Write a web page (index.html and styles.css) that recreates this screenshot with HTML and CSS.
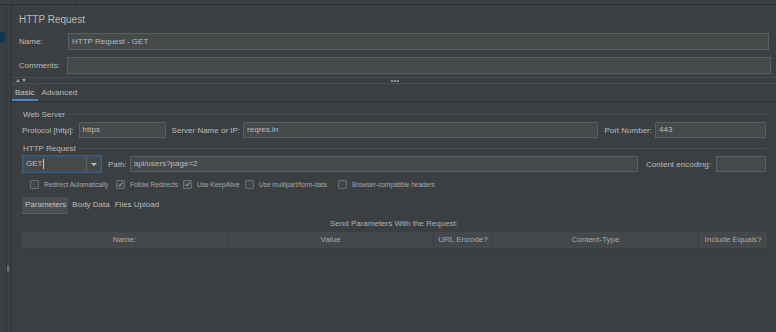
FILE: index.html
```html
<!doctype html>
<html lang="en">
<head>
	<meta charset="UTF-8" />
	<title>HTTP Request</title>
	<link rel="stylesheet" href="styles.css">
</head>
<body>
    <div id="topbar">
        <span class="seg seg1"></span>
        <span class="seg seg2"></span>
    </div>
    <div id="workspace">
        <div id="tree">
            <div class="tree_sel"></div>
        </div>
        <div id="splitter">
            <span class="grip"></span>
        </div>
        <div id="editor">
            <div class="title">HTTP Request</div>
            <div class="field_row name_row">
                <label class="field_label">Name:</label>
                <div class="input">HTTP Request - GET</div>
            </div>
            <div class="field_row comments_row">
                <label class="field_label">Comments:</label>
                <div class="input"></div>
            </div>
            <div class="divider">
                <span class="arrows"><i class="up"></i><i class="down"></i></span>
                <span class="dots"><i></i><i></i><i></i></span>
            </div>
            <ul class="tabs">
                <li class="on">Basic</li>
                <li>Advanced</li>
            </ul>

            <div class="panel">
                <div class="legend"><span>Web Server</span></div>
                <div class="line_row server_row">
                    <label>Protocol [http]:</label>
                    <div class="input w_protocol">https</div>
                    <label class="gap">Server Name or IP:</label>
                    <div class="input grow">reqres.in</div>
                    <label class="gap">Port Number:</label>
                    <div class="input w_port">443</div>
                </div>

                <div class="legend legend_req"><span>HTTP Request</span></div>
                <div class="line_row request_row">
                    <div class="combo">
                        <span class="combo_text">GET<i class="caret"></i></span>
                        <span class="combo_btn"><i></i></span>
                    </div>
                    <label class="gap">Path:</label>
                    <div class="input grow">api/users?page=2</div>
                    <label class="gap_l">Content encoding:</label>
                    <div class="input w_enc"></div>
                </div>

                <ul class="checks">
                    <li><span class="box"></span>Redirect Automatically</li>
                    <li><span class="box"><svg viewBox="0 0 9 9"><polyline points="1.8,4.6 3.6,6.6 7.2,1.8" /></svg></span>Follow Redirects</li>
                    <li><span class="box"><svg viewBox="0 0 9 9"><polyline points="1.8,4.6 3.6,6.6 7.2,1.8" /></svg></span>Use KeepAlive</li>
                    <li><span class="box"></span>Use multipart/form-data</li>
                    <li><span class="box"></span>Browser-compatible headers</li>
                </ul>

                <ul class="subtabs">
                    <li class="on">Parameters</li>
                    <li>Body Data</li>
                    <li>Files Upload</li>
                </ul>

                <div class="send">Send Parameters With the Request:</div>
                <div class="table_head">
                    <span>Name:</span>
                    <span>Value</span>
                    <span>URL Encode?</span>
                    <span>Content-Type</span>
                    <span>Include Equals?</span>
                </div>
            </div>
        </div>
    </div>
</body>
</html>
```

FILE: styles.css
```css
* { margin: 0; padding: 0; box-sizing: border-box; }
html, body { width: 776px; height: 332px; overflow: hidden; }
body { background: #3c3f41; color: #bbbbbb; font-family: "Liberation Sans", Arial, sans-serif; font-size: 8px; }
ul { list-style: none; }
label { white-space: nowrap; }

#topbar { height: 5px; position: relative; background: #3d4042; border-bottom: 1px solid #2f3133; }
#topbar .seg { position: absolute; top: 0; width: 1px; height: 4px; background: #333537; }
#topbar .seg1 { left: 75px; }
#topbar .seg2 { left: 113px; }

#workspace { display: flex; height: 327px; }
#tree { width: 7px; border-right: 1px solid #323537; padding-top: 27px; }
#tree .tree_sel { width: 5px; height: 11px; background: #10374f; }
#splitter { width: 5px; border-right: 1px solid #2e3032; display: flex; align-items: center; justify-content: center; padding-top: 200px; padding-right: 2px; }
#splitter .grip { width: 2px; height: 7px; background: radial-gradient(circle, #9a9a9a 0.7px, transparent 1px) 0 0 / 2px 2.4px; }

#editor { flex: 1; padding-left: 7px; }
.title { margin-top: 7px; height: 16px; line-height: 16px; font-size: 10px; color: #bbbbbb; }

.field_row { display: flex; align-items: center; padding-right: 7px; }
.field_row .field_label { width: 49px; }
.name_row { margin-top: 5px; }
.comments_row { margin-top: 7px; padding-right: 5px; }
.comments_row .field_label { width: 48px; }
.field_row .input { flex: 1; }

.input { height: 16px; line-height: 14px; padding: 0 3px; background: #45494a; border: 1px solid #5c5f60; color: #bbbbbb; white-space: nowrap; overflow: hidden; }
.name_row .input, .comments_row .input { height: 17px; line-height: 15px; }

.divider { margin: 3px 0 0 -7px; height: 7px; border-top: 1px solid #4a4d4f; border-bottom: 1px solid #4a4d4f; position: relative; }
.divider .arrows { position: absolute; left: 4px; top: 1px; display: flex; gap: 2px; }
.divider .arrows i { width: 0; height: 0; border-left: 2.5px solid transparent; border-right: 2.5px solid transparent; }
.divider .arrows .up { border-bottom: 3px solid #a0a0a0; }
.divider .arrows .down { border-top: 3px solid #a0a0a0; }
.divider .dots { position: absolute; left: 379px; top: 1.5px; display: flex; gap: 1px; }
.divider .dots i { width: 2px; height: 2px; background: #b0b0b0; border-radius: 50%; }

.tabs { margin-left: -7px; display: flex; height: 18px; border-bottom: 1px solid #2f3133; }
.tabs li { padding: 2px 3px 0; line-height: 14px; margin-right: 1px; color: #bbbbbb; }
.tabs li.on { background: #3f4244; border-bottom: 2px solid #4a88c7; color: #c4c4c4; }

.panel { margin-left: 3px; padding-right: 10px; }
.legend { display: flex; align-items: center; margin-top: 7px; height: 10px; gap: 3px; }
.legend span { padding-left: 1px; }
.legend::after { content: ""; flex: 1; height: 1px; background: #4c4f51; }
.legend_req { margin-top: 5px; }

.line_row { display: flex; align-items: center; }
.line_row .gap { margin: 0 3px 0 6px; }
.line_row .gap_l { margin: 0 5px 0 8px; }
.server_row > label:first-child { margin-right: 5px; }
.server_row { margin-top: 3px; height: 16px; }
.server_row .input { height: 16px; }
.w_protocol { width: 87px; }
.w_port { width: 111px; }
.w_enc { width: 50px; }
.grow { flex: 1; }
.request_row { margin-top: 2px; height: 18px; }
.request_row .input { height: 16px; }

.combo { width: 80px; height: 18px; display: flex; background: #45494a; border: 1px solid #3b6184; box-shadow: inset 0 0 0 1px #35536e; }
.combo_text { flex: 1; line-height: 16px; padding-left: 3px; display: flex; align-items: center; }
.combo_text .caret { width: 1px; height: 10px; background: #cccccc; margin-left: 1px; }
.combo_btn { width: 15px; border-left: 1px solid #5c5f60; display: flex; align-items: center; justify-content: center; }
.combo_btn i { width: 0; height: 0; border-left: 3px solid transparent; border-right: 3px solid transparent; border-top: 3px solid #c0c0c0; }

.checks { display: flex; margin-top: 6px; height: 10px; padding-left: 8px; font-size: 6.5px; color: #a8a8a8; }
.checks li { display: flex; align-items: center; }
.checks li:nth-child(1) { width: 86px; }
.checks li:nth-child(2) { width: 67px; }
.checks li:nth-child(3) { width: 62px; }
.checks li:nth-child(4) { width: 93px; }
.checks .box { width: 9px; height: 9px; border: 1px solid #6b6e70; background: #43474a; margin-right: 5px; border-radius: 1px; display: inline-flex; }
.checks .box svg { width: 7px; height: 7px; }
.checks .box polyline { fill: none; stroke: #c8c8c8; stroke-width: 1.1; }

.subtabs { display: flex; margin-top: 8px; height: 17px; }
.subtabs li { padding: 0 3px 0 2px; line-height: 16px; }
.subtabs li.on { background: #4a4e50; border-bottom: 1px solid #5c6062; color: #c4c4c4; padding: 0 2px 0 3px; margin-right: 2px; }

.send { margin-top: 5px; height: 10px; line-height: 10px; text-align: center; color: #b0b0b0; }
.table_head { margin-top: 3px; display: grid; grid-template-columns: 205px 205px 58px 205px 1fr; gap: 1px; height: 17px; background: #3a3d3f; border-bottom: 1px solid #383b3d; margin-right: -1px; }
.table_head span { background: #45484a; text-align: center; line-height: 16px; color: #a8a8a8; }
```
